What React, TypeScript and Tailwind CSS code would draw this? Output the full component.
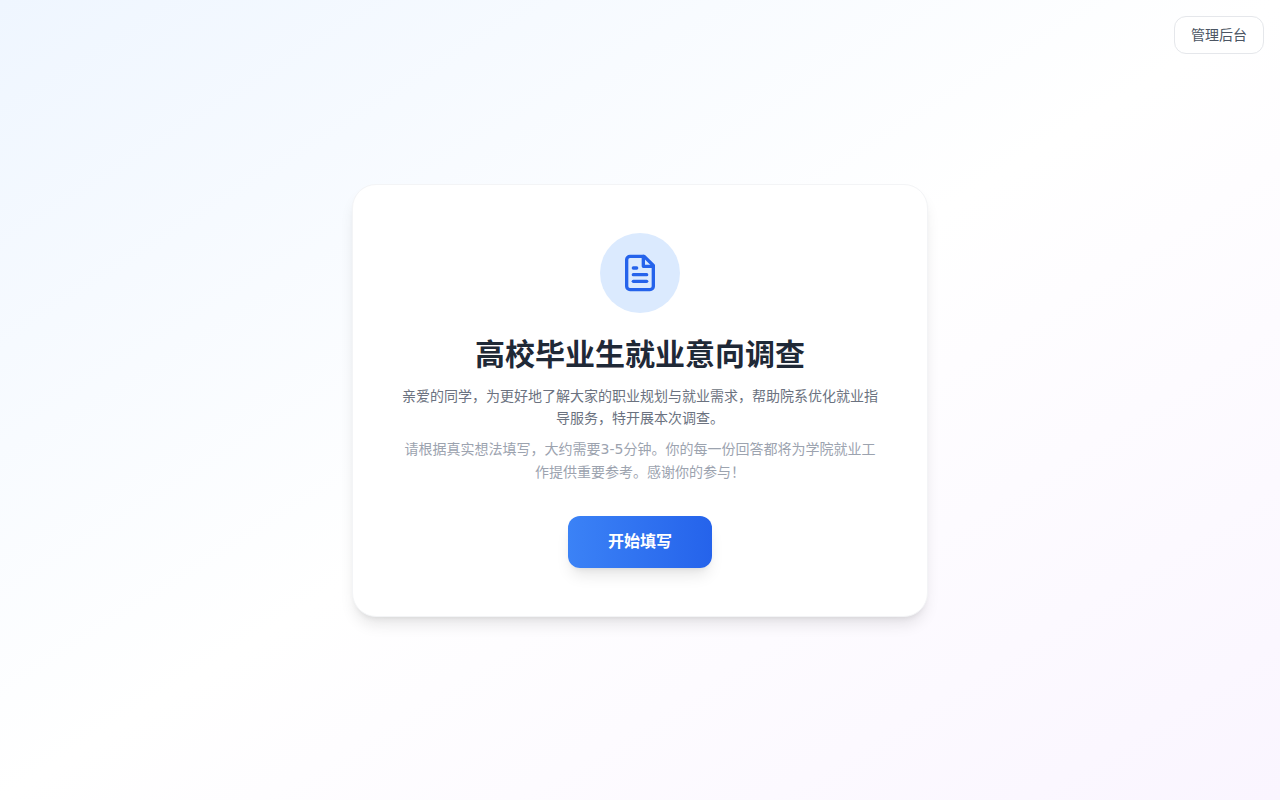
import React from "react";

function DocumentIcon() {
  return (
    <svg
      className="size-10 text-[#2563eb]"
      viewBox="0 0 24 24"
      fill="none"
      stroke="currentColor"
      strokeWidth="2"
      strokeLinecap="round"
      strokeLinejoin="round"
      aria-hidden="true"
    >
      <path d="M14.5 2H6a2 2 0 0 0-2 2v16a2 2 0 0 0 2 2h12a2 2 0 0 0 2-2V7.5L14.5 2z" />
      <path d="M14 2v6h6" />
      <path d="M16 13H8" />
      <path d="M16 17H8" />
      <path d="M10 9H8" />
    </svg>
  );
}

export default function App() {
  return (
    <div className="relative flex min-h-screen items-center justify-center bg-gradient-to-br from-[#eff6ff] via-white to-[#faf5ff] p-4 font-['DejaVu_Sans','Noto_Sans_CJK_SC',sans-serif]">
      <button
        type="button"
        className="absolute top-4 right-4 rounded-xl border border-[#e5e7eb] bg-white/80 px-4 py-2 text-sm text-[#4b5563]"
      >
        管理后台
      </button>
      <main className="w-full max-w-xl rounded-3xl border border-[#f3f4f6] bg-white p-12 text-center shadow-lg">
        <div className="mx-auto mb-6 flex size-20 items-center justify-center rounded-full bg-[#dbeafe]">
          <DocumentIcon />
        </div>
        <h1 className="mb-3 text-3xl font-bold text-[#1f2937]">高校毕业生就业意向调查</h1>
        <p className="mb-2 text-sm leading-relaxed text-[#6b7280]">
          亲爱的同学，为更好地了解大家的职业规划与就业需求，帮助院系优化就业指导服务，特开展本次调查。
        </p>
        <p className="mb-8 text-sm leading-relaxed text-[#9ca3af]">
          请根据真实想法填写，大约需要3-5分钟。你的每一份回答都将为学院就业工作提供重要参考。感谢你的参与！
        </p>
        <button
          type="button"
          className="rounded-xl bg-linear-[to_right,#3b82f6,#2563eb] px-10 py-3.5 font-semibold text-white shadow-lg"
        >
          开始填写
        </button>
      </main>
    </div>
  );
}
